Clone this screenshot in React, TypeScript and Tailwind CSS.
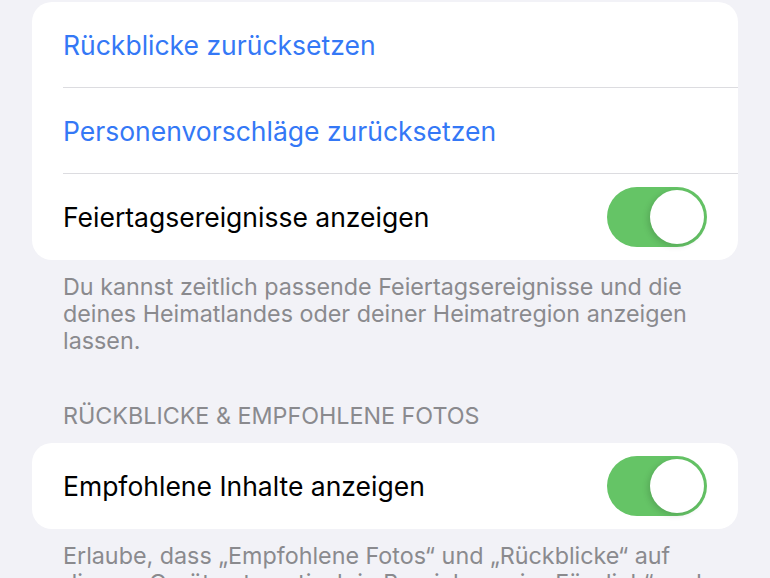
import React from "react";

const font = { fontFamily: "Inter, 'Noto Sans', sans-serif" };

function Toggle() {
  return (
    <div className="relative h-[60px] w-[100px] shrink-0 rounded-full bg-[#65c466]">
      <div className="absolute right-[3px] top-[3px] h-[54px] w-[54px] rounded-full bg-white shadow-[-2px_2px_6px_rgba(0,0,0,0.15)]" />
    </div>
  );
}

function Separator() {
  return <div className="ml-[31px] h-px bg-[#dcdce0]" />;
}

export default function App() {
  return (
    <div
      className="h-[578px] w-[770px] overflow-hidden bg-[#f2f2f7] px-8 pt-[2px]"
      style={font}
    >
      {/* First group */}
      <div className="rounded-[20px] bg-white">
        <div className="flex h-[85px] items-center px-[31px] pt-[2px] text-[26.5px] text-[#3478f6]">
          Rückblicke zurücksetzen
        </div>
        <Separator />
        <div className="flex h-[85px] items-center px-[31px] pt-[2px] text-[26.5px] text-[#3478f6]">
          Personenvorschläge zurücksetzen
        </div>
        <Separator />
        <div className="flex h-[86px] items-center justify-between px-[31px] text-[26.5px] text-black">
          <span className="pt-[2px]">Feiertagsereignisse anzeigen</span>
          <Toggle />
        </div>
      </div>
      <p className="px-[31px] pt-[13px] text-[23.3px] leading-[27px] text-[#8a8a8e]">
        Du kannst zeitlich passende Feiertagsereignisse und die deines
        Heimatlandes oder deiner Heimatregion anzeigen lassen.
      </p>

      {/* Second group */}
      <div className="px-[31px] pt-[48px] pb-[14px] text-[23.3px] leading-[27px] text-[#8a8a8e]">
        RÜCKBLICKE &amp; EMPFOHLENE FOTOS
      </div>
      <div className="rounded-[20px] bg-white">
        <div className="flex h-[86px] items-center justify-between px-[31px] text-[26.5px] text-black">
          <span className="pt-[2px]">Empfohlene Inhalte anzeigen</span>
          <Toggle />
        </div>
      </div>
      <p className="px-[31px] pt-[13px] text-[23.3px] leading-[27px] text-[#8a8a8e]">
        Erlaube, dass „Empfohlene Fotos“ und „Rückblicke“ auf diesem Gerät
        automatisch in Bereichen wie „Für dich“ und in der Suche angezeigt
        werden.
      </p>
    </div>
  );
}
